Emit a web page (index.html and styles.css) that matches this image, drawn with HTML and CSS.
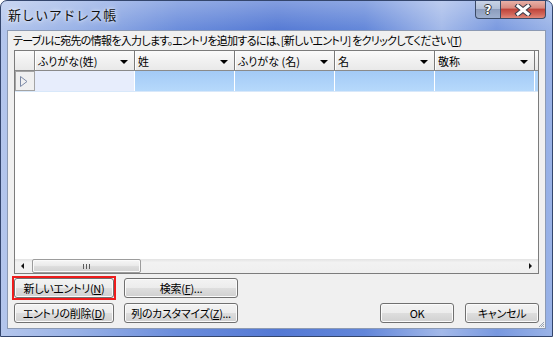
FILE: index.html
```html
<!DOCTYPE html>
<html lang="ja">
  <head>
    <meta charset="UTF-8" />
    <title>新しいアドレス帳</title>
    <link rel="stylesheet" href="styles.css">
  </head>
  <body>
    <div class="window">
      <div class="titlebar">
        <span class="title">新しいアドレス帳</span>
        <div class="caption-btns">
          <div class="cbtn help"><span>?</span></div>
          <div class="cbtn close">
            <svg width="18" height="12" viewBox="0 0 18 12">
              <path d="M4 2 L14 10 M14 2 L4 10" stroke="#3b3b4a" stroke-width="5" stroke-linecap="square" fill="none"/>
              <path d="M4 2 L14 10 M14 2 L4 10" stroke="#fff" stroke-width="3" stroke-linecap="square" fill="none"/>
            </svg>
          </div>
        </div>
      </div>

      <div class="client">
        <div class="hint">テーブルに宛先の情報を入力します。エントリを追加するには、[新しいエントリ] をクリックしてください(<u>T</u>)</div>

        <div class="grid">
          <div class="ghead">
            <div class="corner"></div>
            <div class="col">ふりがな(姓)<span class="drop"></span></div>
            <div class="col">姓<span class="drop"></span></div>
            <div class="col">ふりがな (名)<span class="drop"></span></div>
            <div class="col">名<span class="drop"></span></div>
            <div class="col">敬称<span class="drop"></span></div>
            <div class="rest"></div>
          </div>
          <div class="grow">
            <div class="rowhead">
              <svg width="8" height="11" viewBox="0 0 8 11">
                <path d="M0.5 0.5 L7 5.5 L0.5 10.5 Z" fill="none" stroke="#7d8aa6"/>
              </svg>
            </div>
            <div class="cell first"></div>
            <div class="cell sel"></div>
            <div class="cell sel"></div>
            <div class="cell sel"></div>
            <div class="cell sel last"></div>
          </div>
          <div class="gempty"></div>
          <div class="hscroll">
            <div class="sarrow"><span class="tri left"></span></div>
            <div class="thumb"><span class="grip"></span></div>
            <div class="track"></div>
            <div class="sarrow"><span class="tri right"></span></div>
          </div>
        </div>

        <div class="brow first-row">
          <div class="mark"><button class="btn w100">新しいエントリ(<u>N</u>)</button></div>
          <button class="btn w114">検索(<u>F</u>)...</button>
        </div>
        <div class="brow">
          <button class="btn w100">エントリの削除(<u>D</u>)</button>
          <button class="btn w114">列のカスタマイズ(<u>Z</u>)...</button>
          <button class="btn w74 push">OK</button>
          <button class="btn w74">キャンセル</button>
        </div>

        <svg class="sizegrip" width="7" height="7" viewBox="0 0 7 7">
          <path d="M6 1 L1 6 M6 3 L3 6 M6 5 L5 6" stroke="#9aa3b3" stroke-width="1"/>
        </svg>
      </div>
    </div>
  </body>
</html>
```

FILE: styles.css
```css
* {
  box-sizing: border-box;
}
body {
  margin: 0;
  background: #fff;
  font-family: "Noto Sans CJK JP", "Noto Sans", sans-serif;
  font-size: 11px;
  font-feature-settings: "palt";
  color: #000;
}
u {
  text-decoration-thickness: 1px;
  text-underline-offset: 1px;
}

.window {
  width: 553px;
  height: 337px;
  display: flex;
  flex-direction: column;
  padding: 0 6px 7px 6px;
  border: 1px solid #34466d;
  border-radius: 7px 7px 0 0;
  background:
    linear-gradient(rgba(255, 255, 255, 0.28), rgba(255, 255, 255, 0) 9%),
    linear-gradient(to right, #b4c6ec 0%, #98b1e6 14%, #6a8cdb 32%, #5479d4 50%, #6286d9 66%, #a3b9e9 80%, #7898df 90%, #9ab3e7 100%);
}

.titlebar {
  height: 29px;
  display: flex;
  align-items: flex-start;
}
.title {
  margin: 6px 0 0 1px;
  font-size: 13px;
  font-feature-settings: normal;
  letter-spacing: 0.6px;
  line-height: 16px;
  color: #111;
  text-shadow: 0 0 6px rgba(255, 255, 255, 0.9), 0 0 3px rgba(255, 255, 255, 0.7);
}
.caption-btns {
  margin-left: auto;
  display: flex;
}
.cbtn {
  height: 18px;
  border: 1px solid #3b4a66;
  border-top: none;
  display: flex;
  align-items: center;
  justify-content: center;
}
.help {
  width: 25px;
  border-right: none;
  border-radius: 0 0 0 4px;
  background: linear-gradient(#c9d3e6, #b3c0d8 45%, #8d9dbd 50%, #9fb0cf);
}
.help span {
  font-family: "DejaVu Sans", sans-serif;
  font-weight: bold;
  font-size: 12px;
  color: #fff;
  text-shadow: 1px 0 #333, -1px 0 #333, 0 1px #333, 0 -1px #333;
}
.close {
  width: 46px;
  border-radius: 0 0 4px 0;
  background: linear-gradient(#e8b1a8, #d98b80 40%, #c0463c 50%, #d2685c 80%, #e0897c);
}

.client {
  flex: 1;
  background: #f0f0f0;
  border: 1px solid #8c9ab3;
  display: flex;
  flex-direction: column;
  position: relative;
}
.hint {
  height: 19px;
  line-height: 19px;
  padding-left: 5px;
  letter-spacing: -0.7px;
  white-space: nowrap;
}

.grid {
  margin-left: 6px;
  width: 525px;
  height: 224px;
  border: 1px solid #7c7c7c;
  background: #fff;
  display: flex;
  flex-direction: column;
}
.ghead {
  height: 20px;
  display: flex;
  border-bottom: 1px solid #8a8a8a;
  background: linear-gradient(#fbfbfb, #f1f1f1 50%, #e9e9e9);
}
.corner {
  width: 20px;
  border-right: 1px solid #8a8a8a;
}
.col {
  width: 100px;
  padding: 0 6px 0 3px;
  display: flex;
  align-items: center;
  justify-content: space-between;
  border-right: 1px solid #7a7a7a;
  box-shadow: inset 1px 0 #fff;
  white-space: nowrap;
}
.drop {
  width: 0;
  height: 0;
  margin-top: 2px;
  border-left: 4px solid transparent;
  border-right: 4px solid transparent;
  border-top: 4px solid #000;
}
.rest {
  flex: 1;
}

.grow {
  height: 21px;
  display: flex;
  border-bottom: 1px solid #d8e8fa;
}
.rowhead {
  width: 20px;
  flex-shrink: 0;
  border: 1px solid #a4a4a4;
  background: #f0f0f0;
  display: flex;
  align-items: center;
  justify-content: center;
  padding-right: 3px;
}
.cell {
  width: 100px;
  flex-shrink: 0;
  border-right: 1px solid #fff;
}
.cell.first {
  background: #e7edfc;
}
.cell.sel {
  background: linear-gradient(#a3caf6, #b6d9fb);
}
.cell.last {
  width: 103px;
  border-right: none;
  box-shadow: inset -3px 0 #b2d6fa, inset -4px 0 #fff;
}
.gempty {
  flex: 1;
}

.hscroll {
  height: 14px;
  display: flex;
  background: linear-gradient(#e3e3e3, #f2f2f2 25%, #efefef);
}
.sarrow {
  width: 17px;
  display: flex;
  align-items: center;
  justify-content: center;
}
.tri {
  width: 0;
  height: 0;
  border-top: 3px solid transparent;
  border-bottom: 3px solid transparent;
}
.tri.left {
  border-right: 3px solid #111;
  margin-right: 3px;
}
.tri.right {
  border-left: 3px solid #111;
  margin-left: 2px;
}
.thumb {
  width: 109px;
  border: 1px solid #9c9c9c;
  border-radius: 2px;
  background: linear-gradient(#f6f6f6, #ebebeb 45%, #dcdcdc 55%, #d3d3d3);
  box-shadow: inset 0 0 0 1px #fafafa;
  display: flex;
  align-items: center;
  justify-content: center;
}
.grip {
  width: 7px;
  height: 5px;
  background: repeating-linear-gradient(to right, #5a5a5a 0 1px, transparent 1px 3px);
}
.track {
  flex: 1;
}

.brow {
  display: flex;
  gap: 10px;
  margin: 5px 6px 0 6px;
}
.brow.first-row {
  margin-top: 4px;
}
.btn {
  height: 20px;
  padding: 0;
  border: 1px solid #707070;
  border-radius: 3px;
  background: linear-gradient(#f3f3f3 0%, #ececec 50%, #dedede 50%, #d0d0d0 100%);
  box-shadow: inset 0 0 0 1px #fbfbfb;
  font: inherit;
  letter-spacing: -0.3px;
  line-height: 17px;
  color: #000;
}
.w100 {
  width: 100px;
}
.w114 {
  width: 114px;
}
.w74 {
  width: 74px;
}
.push {
  margin-left: auto;
  margin-right: 1px;
}
.mark {
  display: flex;
  margin: -2px;
  border: 2px solid #ee1c1c;
}
.sizegrip {
  position: absolute;
  right: 0;
  bottom: 0;
}
```
